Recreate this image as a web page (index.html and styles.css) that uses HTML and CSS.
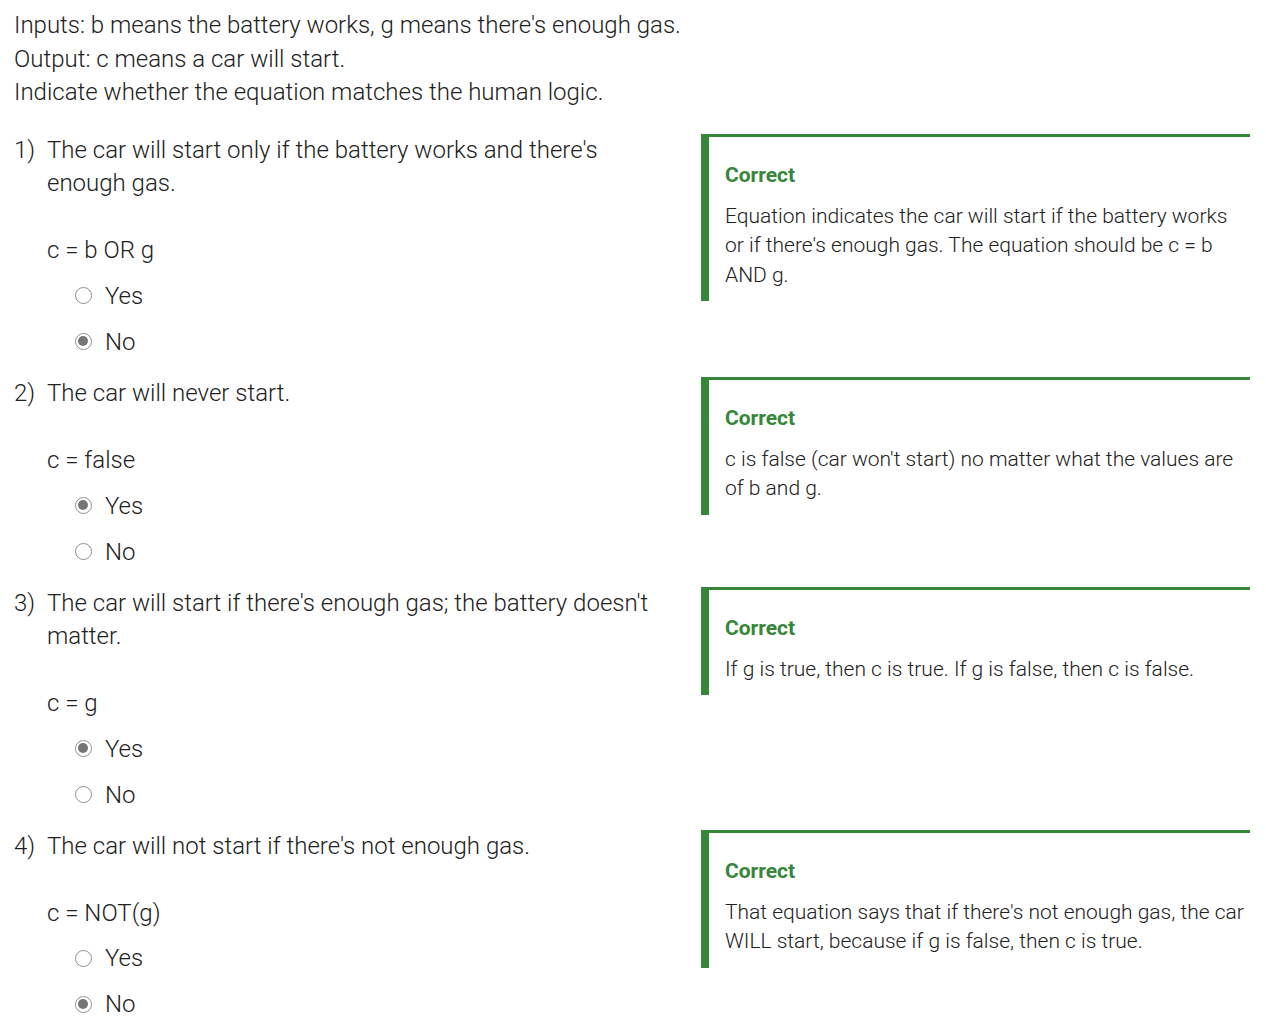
FILE: index.html
```html
<!DOCTYPE html>
<html>
<head>
<meta charset="utf-8">
<link rel="stylesheet" href="styles.css">
</head>
<body>
<div class="page">
  <div class="intro">
    <div>Inputs: b means the battery works, g means there's enough gas.</div>
    <div>Output: c means a car will start.</div>
    <div>Indicate whether the equation matches the human logic.</div>
  </div>

  <div class="question">
    <div class="q-left">
      <div class="q-row"><span class="q-num">1)</span><span class="q-text">The car will start only if the battery works and there's enough gas.</span></div>
      <div class="equation">c = b OR g</div>
      <div class="options">
        <label class="option"><input type="radio" name="q1"><span>Yes</span></label>
        <label class="option"><input type="radio" name="q1" checked><span>No</span></label>
      </div>
    </div>
    <div class="feedback">
      <div class="fb-title">Correct</div>
      <div class="fb-text">Equation indicates the car will start if the battery works or if there's enough gas. The equation should be c = b AND g.</div>
    </div>
  </div>

  <div class="question">
    <div class="q-left">
      <div class="q-row"><span class="q-num">2)</span><span class="q-text">The car will never start.</span></div>
      <div class="equation">c = false</div>
      <div class="options">
        <label class="option"><input type="radio" name="q2" checked><span>Yes</span></label>
        <label class="option"><input type="radio" name="q2"><span>No</span></label>
      </div>
    </div>
    <div class="feedback">
      <div class="fb-title">Correct</div>
      <div class="fb-text">c is false (car won't start) no matter what the values are of b and g.</div>
    </div>
  </div>

  <div class="question">
    <div class="q-left">
      <div class="q-row"><span class="q-num">3)</span><span class="q-text">The car will start if there's enough gas; the battery doesn't matter.</span></div>
      <div class="equation">c = g</div>
      <div class="options">
        <label class="option"><input type="radio" name="q3" checked><span>Yes</span></label>
        <label class="option"><input type="radio" name="q3"><span>No</span></label>
      </div>
    </div>
    <div class="feedback">
      <div class="fb-title">Correct</div>
      <div class="fb-text">If g is true, then c is true. If g is false, then c is false.</div>
    </div>
  </div>

  <div class="question">
    <div class="q-left">
      <div class="q-row"><span class="q-num">4)</span><span class="q-text">The car will not start if there's not enough gas.</span></div>
      <div class="equation">c = NOT(g)</div>
      <div class="options">
        <label class="option"><input type="radio" name="q4"><span>Yes</span></label>
        <label class="option"><input type="radio" name="q4" checked><span>No</span></label>
      </div>
    </div>
    <div class="feedback">
      <div class="fb-title">Correct</div>
      <div class="fb-text">That equation says that if there's not enough gas, the car WILL start, because if g is false, then c is true.</div>
    </div>
  </div>
</div>
</body>
</html>
```

FILE: styles.css
```css
html, body {
  margin: 0;
  padding: 0;
  background: #ffffff;
}
body {
  font-family: Roboto, "Noto Sans", sans-serif;
  font-weight: 300;
  color: #212121;
}
.page {
  padding: 9px 16px 0 12px;
  width: 1238px;
  box-sizing: content-box;
}
.intro {
  font-size: 24px;
  line-height: 33.6px;
  padding-left: 2px;
  margin-bottom: 24px;
}
.question {
  display: grid;
  grid-template-columns: 657px 549px;
  column-gap: 32px;
  align-items: start;
  margin-bottom: 12px;
}
.q-row {
  display: flex;
  font-size: 24px;
  line-height: 33.6px;
}
.q-num {
  width: 35px;
  flex: none;
  padding-left: 2px;
  box-sizing: border-box;
}
.q-text {
  flex: 1;
}
.equation {
  font-size: 24px;
  line-height: 33.6px;
  margin-top: 33.4px;
  padding-left: 35px;
}
.options {
  margin-top: 5px;
  padding-left: 63px;
}
.option {
  display: flex;
  align-items: center;
  height: 46px;
  font-size: 24px;
  gap: 13px;
  cursor: pointer;
}
.option input {
  appearance: none;
  -webkit-appearance: none;
  margin: 0;
  width: 17px;
  height: 17px;
  border: 1.5px solid #8f8f8f;
  border-radius: 50%;
  box-sizing: border-box;
  position: relative;
  flex: none;
  background: #fff;
}
.option input:checked::after {
  content: "";
  position: absolute;
  left: 2px;
  top: 2px;
  width: 10px;
  height: 10px;
  border-radius: 50%;
  background: #757575;
}
.feedback {
  border-top: 3px solid #36873a;
  border-left: 8px solid #36873a;
  padding: 24px 5px 11px 16px;
}
.fb-title {
  color: #36873a;
  font-weight: 700;
  font-size: 21px;
  line-height: 29.5px;
  margin-bottom: 11.5px;
}
.fb-text {
  font-size: 21px;
  line-height: 29.5px;
}
```
